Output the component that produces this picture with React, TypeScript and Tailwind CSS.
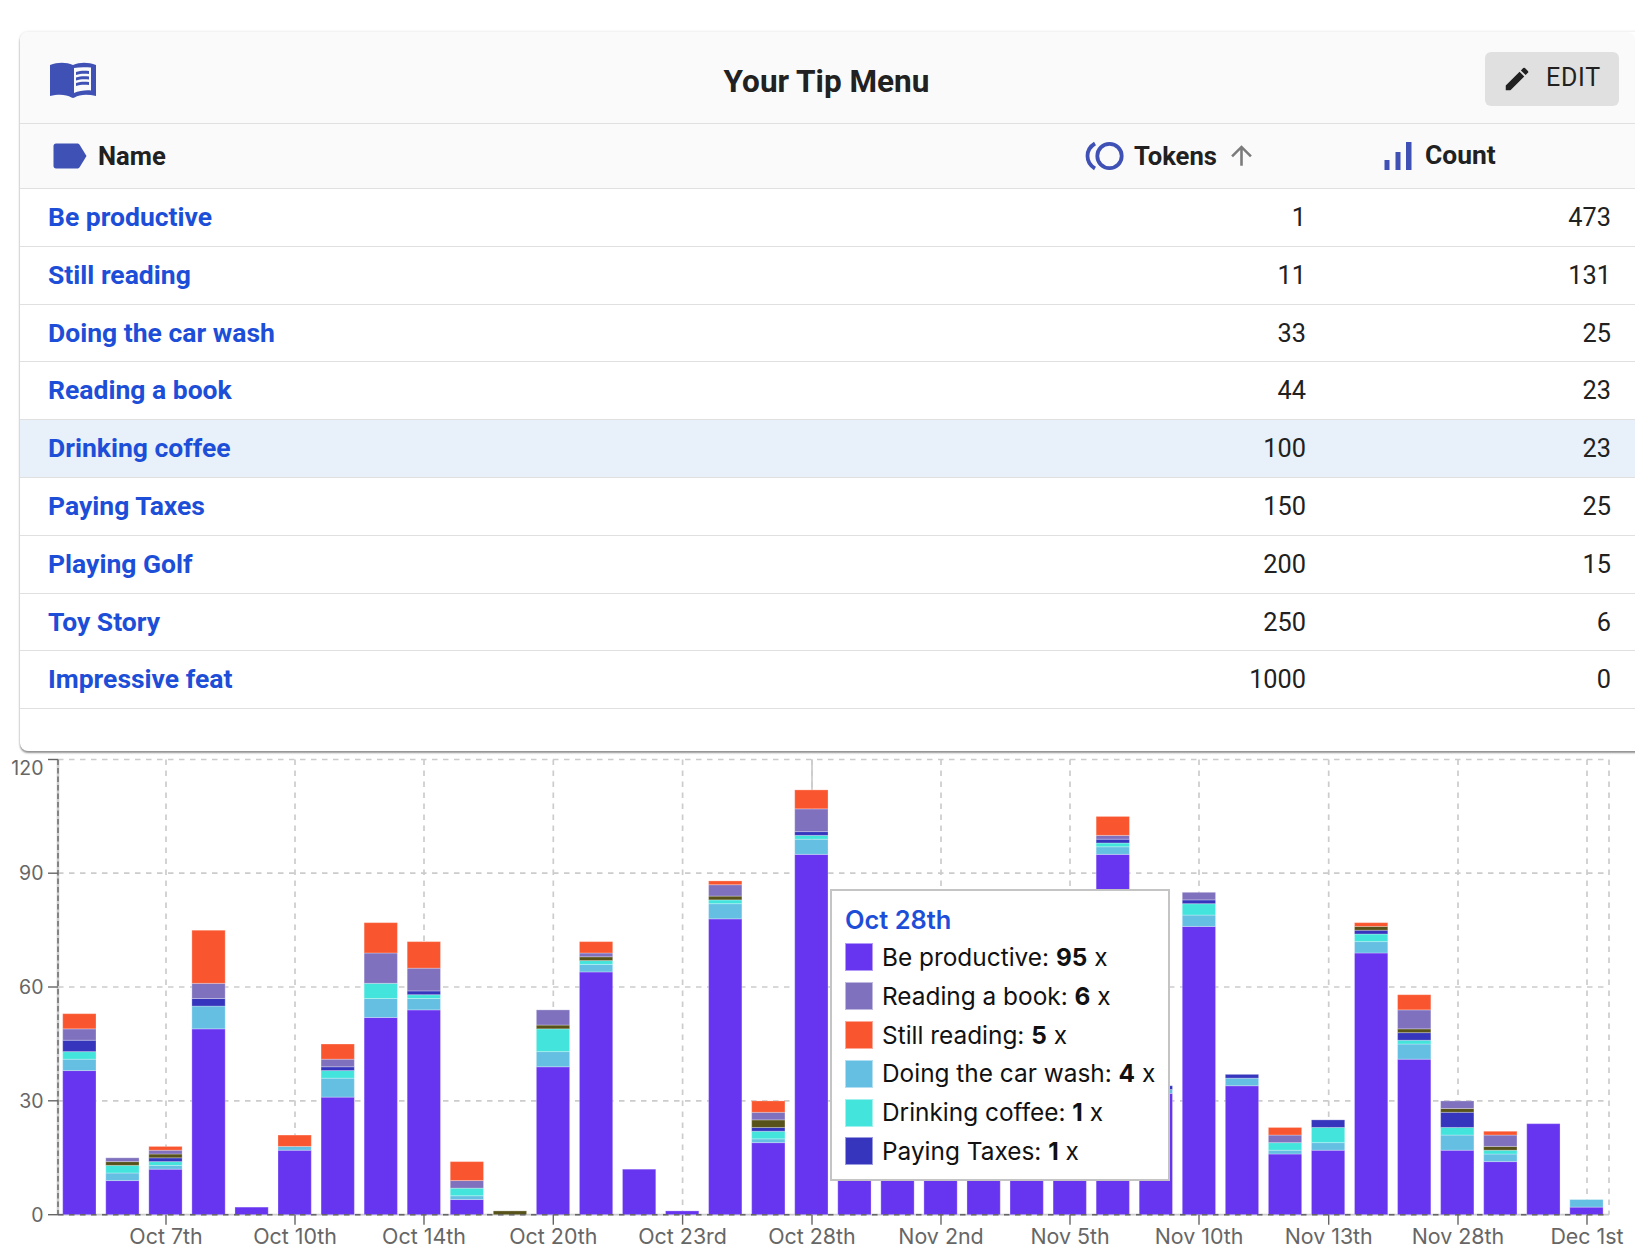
const PURPLE = "#6735f0";
const BLUE = "#64bfe3";
const TEAL = "#43e4dc";
const TAXES = "#3536bd";
const OLIVE = "#575219";
const BOOK = "#7f71be";
const STILL = "#f9552e";

const menu = [
  { name: "Be productive", tokens: 1, count: 473 },
  { name: "Still reading", tokens: 11, count: 131 },
  { name: "Doing the car wash", tokens: 33, count: 25 },
  { name: "Reading a book", tokens: 44, count: 23 },
  { name: "Drinking coffee", tokens: 100, count: 23, selected: true },
  { name: "Paying Taxes", tokens: 150, count: 25 },
  { name: "Playing Golf", tokens: 200, count: 15 },
  { name: "Toy Story", tokens: 250, count: 6 },
  { name: "Impressive feat", tokens: 1000, count: 0 },
];

// value stacks, bottom to top: purple, car wash, coffee, taxes, golf, book, still
const bars = [
  [38, 3, 2, 3, 0, 3, 4],
  [9, 2, 2, 0, 1, 1, 0],
  [12, 1, 1, 1, 1, 1, 1],
  [49, 6, 0, 2, 0, 4, 14],
  [2, 0, 0, 0, 0, 0, 0],
  [17, 1, 0, 0, 0, 0, 3],
  [31, 5, 2, 1, 0, 2, 4],
  [52, 5, 4, 0, 0, 8, 8],
  [54, 3, 1, 1, 0, 6, 7],
  [4, 1, 2, 0, 0, 2, 5],
  [0, 0, 0, 0, 1, 0, 0],
  [39, 4, 6, 0, 1, 4, 0],
  [64, 2, 1, 0, 1, 1, 3],
  [12, 0, 0, 0, 0, 0, 0],
  [1, 0, 0, 0, 0, 0, 0],
  [78, 4, 1, 0, 1, 3, 1],
  [19, 1, 2, 1, 2, 2, 3],
  [95, 4, 1, 1, 0, 6, 5],
  [40, 0, 0, 0, 0, 0, 0],
  [40, 0, 0, 0, 0, 0, 0],
  [40, 0, 0, 0, 0, 0, 0],
  [40, 0, 0, 0, 0, 0, 0],
  [40, 0, 0, 0, 0, 0, 0],
  [40, 0, 0, 0, 0, 0, 0],
  [95, 2, 1, 1, 0, 1, 5],
  [32, 1, 0, 1, 0, 0, 0],
  [76, 3, 3, 1, 0, 2, 0],
  [34, 2, 0, 1, 0, 0, 0],
  [16, 1, 2, 0, 0, 2, 2],
  [17, 2, 4, 2, 0, 0, 0],
  [69, 3, 2, 1, 1, 0, 1],
  [41, 4, 1, 2, 1, 5, 4],
  [17, 4, 2, 4, 1, 2, 0],
  [14, 2, 1, 0, 1, 3, 1],
  [24, 0, 0, 0, 0, 0, 0],
  [2, 2, 0, 0, 0, 0, 0],
];
const stackColors = [PURPLE, BLUE, TEAL, TAXES, OLIVE, BOOK, STILL];

const xTicks = [
  { x: 166, label: "Oct 7th" },
  { x: 295, label: "Oct 10th" },
  { x: 424, label: "Oct 14th" },
  { x: 553.3, label: "Oct 20th" },
  { x: 682.6, label: "Oct 23rd" },
  { x: 812, label: "Oct 28th" },
  { x: 941, label: "Nov 2nd" },
  { x: 1070, label: "Nov 5th" },
  { x: 1199, label: "Nov 10th" },
  { x: 1328.7, label: "Nov 13th" },
  { x: 1458, label: "Nov 28th" },
  { x: 1587, label: "Dec 1st" },
];
const yTicks = [
  { y: 1214.7, label: "0" },
  { y: 1100.8, label: "30" },
  { y: 987, label: "60" },
  { y: 873.2, label: "90" },
  { y: 759.5, label: "120" },
];

const tooltipRows = [
  { swatch: "bg-[#6735f0]", name: "Be productive", n: 95 },
  { swatch: "bg-[#7f71be]", name: "Reading a book", n: 6 },
  { swatch: "bg-[#f9552e]", name: "Still reading", n: 5 },
  { swatch: "bg-[#64bfe3]", name: "Doing the car wash", n: 4 },
  { swatch: "bg-[#43e4dc]", name: "Drinking coffee", n: 1 },
  { swatch: "bg-[#3536bd]", name: "Paying Taxes", n: 1 },
];

function BookIcon() {
  return (
    <svg viewBox="0 0 46 36" className="mt-[4px] w-[46px] h-[36px]" fill="#3f51b5">
      <path
        fillRule="evenodd"
        d="M0 3C8 0 16 0 23 3C30 0 38 0 46 3V34C38 32 30 32 24.5 35.5L23 36L21.5 35.5C16 32 8 32 0 34ZM24 6V31C29 29 35 28 41 28.5V5.5C35 5 29 5 24 6Z"
      />
      <path d="M26 10C30 8.5 35 8.5 39 9V12C35 11.5 30 11.5 26 13ZM26 15.5C30 14 35 14 39 14.5V17.5C35 17 30 17 26 18.5ZM26 21C30 19.5 35 19.5 39 20V23C35 22.5 30 22.5 26 24Z" />
    </svg>
  );
}

function TagIcon() {
  return (
    <svg viewBox="0 0 34 26" className="w-[34px] h-[26px]" fill="#3f51b5">
      <path d="M3 0.5H24C25 0.5 26 1 26.6 1.8L33.5 13L26.6 24.2C26 25 25 25.5 24 25.5H3C1.5 25.5 0.5 24.5 0.5 23V3C0.5 1.5 1.5 0.5 3 0.5Z" />
    </svg>
  );
}

function TokensIcon() {
  return (
    <svg viewBox="0 0 40 30" className="w-[40px] h-[30px]" fill="none" stroke="#3f51b5" strokeWidth="3.8">
      <circle cx="25.5" cy="15" r="12.2" />
      <path d="M11 2.5C1 8.5 1 21.5 11 27.5" />
    </svg>
  );
}

function CountIcon() {
  return (
    <svg viewBox="0 0 28 28" className="w-[28px] h-[28px]" fill="#3f51b5">
      <rect x="0.5" y="18" width="5" height="10" />
      <rect x="11.5" y="10" width="5" height="18" />
      <rect x="22" y="0" width="5.5" height="28" />
    </svg>
  );
}

function PencilIcon() {
  return (
    <svg viewBox="0 0 24 24" className="w-[30px] h-[30px]" fill="#212121">
      <path d="M3 17.25V21h3.75L17.81 9.94l-3.75-3.75L3 17.25zM20.71 7.04a1 1 0 0 0 0-1.41l-2.34-2.34a1 1 0 0 0-1.41 0l-1.83 1.83 3.75 3.75 1.83-1.83z" />
    </svg>
  );
}

function ArrowIcon() {
  return (
    <svg viewBox="0 0 24 24" className="w-[31px] h-[31px]" fill="#7b7b7b">
      <path d="M4 12l1.41 1.41L11 7.83V20h2V7.83l5.58 5.59L20 12l-8-8-8 8z" />
    </svg>
  );
}

function Chart() {
  const unit = 3.793;
  const baseY = 1214.7;
  const top = 759.5;
  return (
    <svg width="1635" height="1259" viewBox="0 0 1635 1259" className="block">
      <g stroke="#cccccc" strokeWidth="1.7" strokeDasharray="5.5 5.5" fill="none">
        {yTicks.map((t) => (
          <line key={t.y} x1="58" x2="1609" y1={t.y} y2={t.y} />
        ))}
        {xTicks.map((t) => (
          <line key={t.x} x1={t.x} x2={t.x} y1={top} y2={baseY} />
        ))}
        <line x1="1609" x2="1609" y1={top} y2={baseY} />
      </g>
      <line x1="58" x2="58" y1={top} y2={baseY} stroke="#cccccc" strokeWidth="2.5" />
      <line x1="58" x2="1609" y1={baseY} y2={baseY} stroke="#cccccc" strokeWidth="1.7" />
      <line x1="812" x2="812" y1={top} y2={790} stroke="#cccccc" strokeWidth="1.7" />
      {bars.map((stack, i) => {
        const x = 62.7 + i * 43.06;
        let sum = 0;
        return (
          <g key={i}>
            {stack.map((v, j) => {
              if (!v) return null;
              sum += v;
              return (
                <rect
                  key={j}
                  x={x}
                  y={baseY - sum * unit}
                  width="33.3"
                  height={v * unit}
                  fill={stackColors[j]}
                  stroke="#ffffff"
                  strokeOpacity="0.28"
                  strokeWidth="1"
                />
              );
            })}
          </g>
        );
      })}
      <g stroke="#666666" strokeWidth="1.4" fill="none">
        <line x1="58" x2="58" y1={top} y2={baseY} strokeDasharray="5.5 3" />
        <line x1="58" x2="1609" y1={baseY} y2={baseY} strokeDasharray="5.5 5.5" />
        {yTicks.map((t) => (
          <line key={t.y} x1="48" x2="58" y1={t.y} y2={t.y} />
        ))}
        {xTicks.map((t) => (
          <line key={t.x} x1={t.x} x2={t.x} y1={baseY} y2={baseY + 10} />
        ))}
      </g>
      <g fill="#666666" style={{ fontFamily: "Inter, sans-serif" }}>
        {yTicks.map((t, i) => (
          <text key={t.y} x="43.5" y={i === 4 ? 775 : t.y + 7.2} textAnchor="end" fontSize="19.5">
            {t.label}
          </text>
        ))}
        {xTicks.map((t) => (
          <text key={t.x} x={t.x} y="1244" textAnchor="middle" fontSize="21.4">
            {t.label}
          </text>
        ))}
      </g>
    </svg>
  );
}

export default function App() {
  return (
    <div className="relative w-[1635px] h-[1259px] overflow-hidden bg-white font-['Roboto',sans-serif]">
      <Chart />
      <div className="absolute left-[20px] top-[32px] w-[1650px] rounded-[8px] bg-white shadow-[0_2px_2px_rgba(0,0,0,0.4),0_0_3px_rgba(0,0,0,0.14)]">
        <div className="flex h-[92px] items-center justify-between rounded-t-[8px] bg-[#fafafa] border-b border-[#e0e0e0] pl-[30px] pr-[16px] w-[1615px]">
          <BookIcon />
          <h1 className="pt-[9px] ml-[72px] text-[#212121] text-[31.5px] font-bold">Your Tip Menu</h1>
          <button className="mt-[2px] flex h-[54px] w-[134px] items-center gap-[14px] rounded-[6px] bg-[#e0e0e0] pl-[17px] text-[25px] tracking-[0.03em] text-[#212121]">
            <PencilIcon />
            <span className="mt-[-2px]">EDIT</span>
          </button>
        </div>
        <div className="w-[1615px]">
          <div className="flex h-[65px] items-center bg-[#fafafa] border-b border-[#e0e0e0] text-[25.6px] font-bold text-[#212121]">
            <div className="flex items-center w-[1064px] pl-[33px] gap-[11px]">
              <TagIcon />
              Name
            </div>
            <div className="flex items-center w-[300px] gap-[10px]">
              <TokensIcon />
              <span className="flex items-center gap-[9px]">
                Tokens
                <ArrowIcon />
              </span>
            </div>
            <div className="flex items-center gap-[13px]">
              <CountIcon />
              <span className="text-[26.4px]">Count</span>
            </div>
          </div>
          {menu.map((row) => (
            <div
              key={row.name}
              className={
                row.selected
                  ? "flex h-[57.8px] pt-[1px] items-center border-b border-[#e0e0e0] bg-[#e8f0f9] text-[25.3px] text-[#212121]"
                  : "flex h-[57.8px] pt-[1px] items-center border-b border-[#e0e0e0] text-[25.3px] text-[#212121]"
              }
            >
              <a className="mt-[-2px] w-[1000px] pl-[28px] font-bold text-[26.5px] text-[#1d4ed8]">{row.name}</a>
              <span className="w-[286px] text-right">{row.tokens}</span>
              <span className="w-[305px] text-right">{row.count}</span>
            </div>
          ))}
          <div className="h-[42px]" />
        </div>
      </div>
      <div className="absolute left-[830px] top-[889px] w-[340px] h-[292px] border-2 border-[#c4c4c4] bg-white pl-[13px] pt-[14px] font-['Inter',sans-serif] text-[24.4px] text-[#111111]">
        <div className="font-semibold text-[25.4px] text-[#1d4ed8] leading-[30px] mb-[3px]">Oct 28th</div>
        <div className="flex flex-col">
          {tooltipRows.map((r) => (
            <div key={r.name} className="flex h-[38.8px] items-center gap-[9px]">
              <span className={`w-[28px] h-[28px] border border-white/50 ${r.swatch}`} />
              <span>
                {r.name}: <b className="font-bold">{r.n}</b> x
              </span>
            </div>
          ))}
        </div>
      </div>
    </div>
  );
}
